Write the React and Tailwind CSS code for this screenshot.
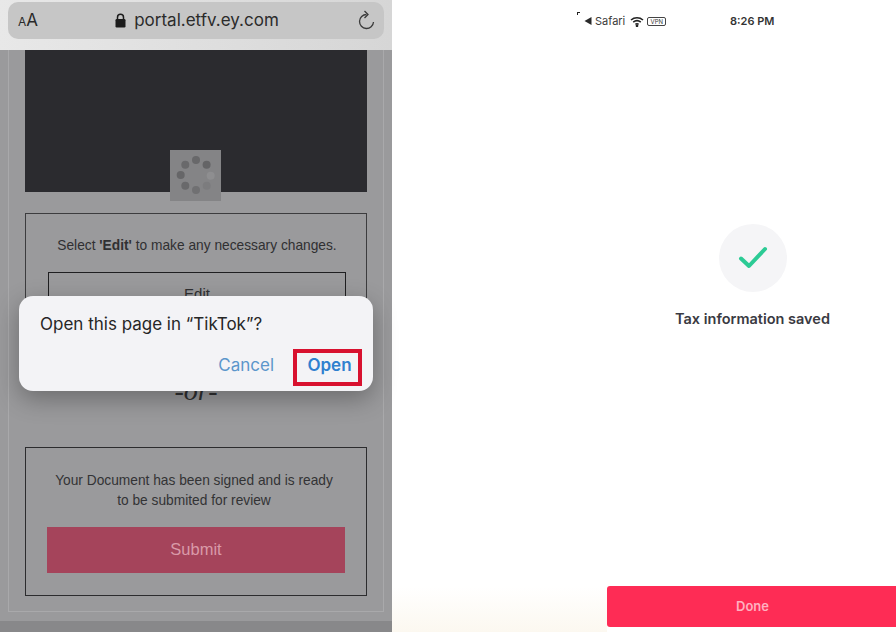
const SPINNER_DOTS = [
	{ x: 26, y: 10, c: '#68686a' },
	{ x: 36.6, y: 14.7, c: '#646466' },
	{ x: 40.7, y: 25.7, c: '#8e8e90' },
	{ x: 36.7, y: 35.7, c: '#7c7c7e' },
	{ x: 26, y: 40, c: '#707072' },
	{ x: 15.3, y: 35.7, c: '#69696b' },
	{ x: 10.7, y: 25, c: '#666668' },
	{ x: 15.3, y: 14.7, c: '#69696b' },
];

const Spinner = () => (
	<div className="absolute left-[145px] top-[100px] w-[51px] h-[51px] bg-[#848486]">
		<svg width="51" height="51" viewBox="0 0 51 51">
			{ SPINNER_DOTS.map( ( d ) => (
				<circle key={ `${ d.x }-${ d.y }` } cx={ d.x } cy={ d.y } r="4" fill={ d.c } />
			) ) }
		</svg>
	</div>
);

const BrowserBar = () => (
	<div className="h-[50px] bg-gradient-to-r from-[#e8e8e8] to-[#d6d6d6] px-2 pt-[2px] font-['Inter',sans-serif]">
		<div className="h-[37px] rounded-[10px] bg-[#c6c6c6] flex items-center pl-[10px] pr-[8px]">
			<span className="text-[#2a2a2a] leading-none flex items-baseline w-[22px]">
				<span className="text-[12px]">A</span>
				<span className="text-[17px]">A</span>
			</span>
			<div className="flex-1 flex items-center justify-center gap-[8px] pl-[0px] pr-[3px]">
				<svg width="11" height="15" viewBox="0 0 11 15">
					<path d="M2.5 6.5V4.2a3 3 0 0 1 6 0v2.3" fill="none" stroke="#1c1c1c" strokeWidth="1.5" />
					<rect x="0.5" y="6" width="10" height="8.5" rx="1.2" fill="#1c1c1c" />
				</svg>
				<span className="text-[17px] text-[#2b2b2b] leading-none">portal.etfv.ey.com</span>
			</div>
			<svg width="19" height="21" viewBox="0 0 19 21" fill="none" stroke="#3a3a3a" strokeWidth="1.3">
				<path d="M9.5 4.5a7 7 0 1 0 7 7.5" />
				<path d="M7.5 1l3.5 3.5L7.5 8" />
			</svg>
		</div>
	</div>
);

const OpenDialog = () => (
	<div className="absolute left-[19px] top-[296px] w-[354px] h-[95px] rounded-[14px] bg-[#f3f3f6] shadow-[0_8px_24px_rgba(0,0,0,0.3)] pt-[17px] pl-[21px] pr-[11px] font-['Inter',sans-serif]">
		<div className="text-[17px] leading-[23px] text-[#262626] whitespace-nowrap">Open this page in “TikTok”?</div>
		<div className="flex justify-end items-center gap-[19px] mt-[13px]">
			<span className="text-[#5b96cb] text-[17px] leading-[24px] pb-[6px]">Cancel</span>
			<span className="w-[69px] h-[37px] border-[4px] border-[#d8112f] flex items-center justify-center text-[#2f80cf] text-[17px] font-semibold leading-none pb-[5px] pl-[4px]">
				Open
			</span>
		</div>
	</div>
);

const LeftPanel = () => (
	<div className="w-[392px] h-full relative flex flex-col bg-[#9a9a9c] font-['Liberation_Sans',sans-serif]">
		<BrowserBar />
		<div className="flex-1 flex flex-col">
			<div className="h-[562px] mx-[8px] border-r border-b border-l border-[#a9a9ab] px-[16px] flex flex-col shrink-0">
				<div className="relative h-[142px] bg-[#2b2b2f] shrink-0">
					<Spinner />
				</div>
				<div className="mt-[21px] h-[170px] border border-[#3c3c3e] pl-[22px] pr-[20px] pt-[23px] shrink-0">
					<p className="text-center text-[13.75px] leading-[18px] text-[#303032] whitespace-nowrap">
						Select <b>'Edit'</b> to make any necessary changes.
					</p>
					<div className="mt-[17px] h-[48px] border border-[#1f1f21] flex justify-center pt-[10px] text-[15px] text-[#303032]">
						Edit
					</div>
				</div>
				<div className="h-[34px] -mt-[9px] text-center font-['Liberation_Serif',serif] italic text-[28px] leading-[34px] text-[#303032] shrink-0">
					-or-
				</div>
				<div className="mt-[39px] h-[149px] border border-[#2c2c2e] px-[21px] pt-[23px] shrink-0">
					<p className="text-center text-[13.75px] leading-[20px] text-[#333335] pr-[4px]">
						Your Document has been signed and is ready
						<br />
						to be submited for review
					</p>
					<div className="mt-[16px] h-[46px] bg-[#a5445b] flex items-center justify-center text-[16.5px] text-[#d99aa8] pb-[2px]">
						Submit
					</div>
				</div>
			</div>
			<div className="flex-1 mt-[9px] bg-[#88888a]" />
		</div>
		<OpenDialog />
	</div>
);

const StatusBar = () => (
	<div className="h-[42px] flex items-center pl-[192px] text-[#3a3a3a] relative font-['Inter',sans-serif]">
		<span className="absolute left-[185px] top-[12px] w-[3px] h-[3px] border-t border-l border-[#222]" />
		<div className="flex items-center w-[146px]">
			<svg width="8" height="8" viewBox="0 0 7 8">
				<path d="M7 0v8L0 4z" fill="#2a2a2a" />
			</svg>
			<span className="ml-[3px] text-[11px] leading-none">Safari</span>
			<svg className="ml-[5px]" width="14" height="11" viewBox="0 0 14 11" fill="none" stroke="#222" strokeWidth="1.5">
				<path d="M1 4a9 9 0 0 1 12 0" />
				<path d="M3.2 6.2a6 6 0 0 1 7.6 0" />
				<path d="M5.4 8.4a2.6 2.6 0 0 1 3.2 0" />
				<circle cx="7" cy="9.8" r="0.6" fill="#222" />
			</svg>
			<span className="ml-[3px] w-[19px] text-center border border-[#444] rounded-[2px] text-[6px] leading-[7px]">VPN</span>
		</div>
		<span className="text-[11px] font-semibold leading-none text-[#333] whitespace-nowrap">8:26 PM</span>
	</div>
);

const RightPanel = () => (
	<div className="flex-1 h-full bg-white flex flex-col font-['Inter',sans-serif] min-w-0">
		<StatusBar />
		<div className="flex flex-col items-center pl-[217px] pt-[182px]">
			<div className="w-[68px] h-[68px] rounded-full bg-[#f5f5f7] flex items-center justify-center">
				<svg width="30" height="24" viewBox="0 0 30 24" fill="none">
					<path d="M3 12.5l8 7.5L27 3" stroke="#2ccb95" strokeWidth="4" strokeLinecap="round" strokeLinejoin="round" />
				</svg>
			</div>
			<p className="mt-[17px] text-[14.5px] font-semibold leading-[20px] text-[#3a3a42] whitespace-nowrap">
				Tax information saved
			</p>
		</div>
		<div className="mt-auto flex h-[46px]">
			<div className="w-[215px] shrink-0 bg-gradient-to-t from-[#fcf8f0] to-white" />
			<div className="flex-1 h-[41px] rounded-l-[3px] bg-[#fe2c55] flex items-center justify-center text-[13px] font-semibold text-[#ffb0c0] pl-[2px]">
				Done
			</div>
		</div>
	</div>
);

export default function App() {
	return (
		<div className="w-[896px] h-[632px] flex overflow-hidden">
			<LeftPanel />
			<RightPanel />
		</div>
	);
}
